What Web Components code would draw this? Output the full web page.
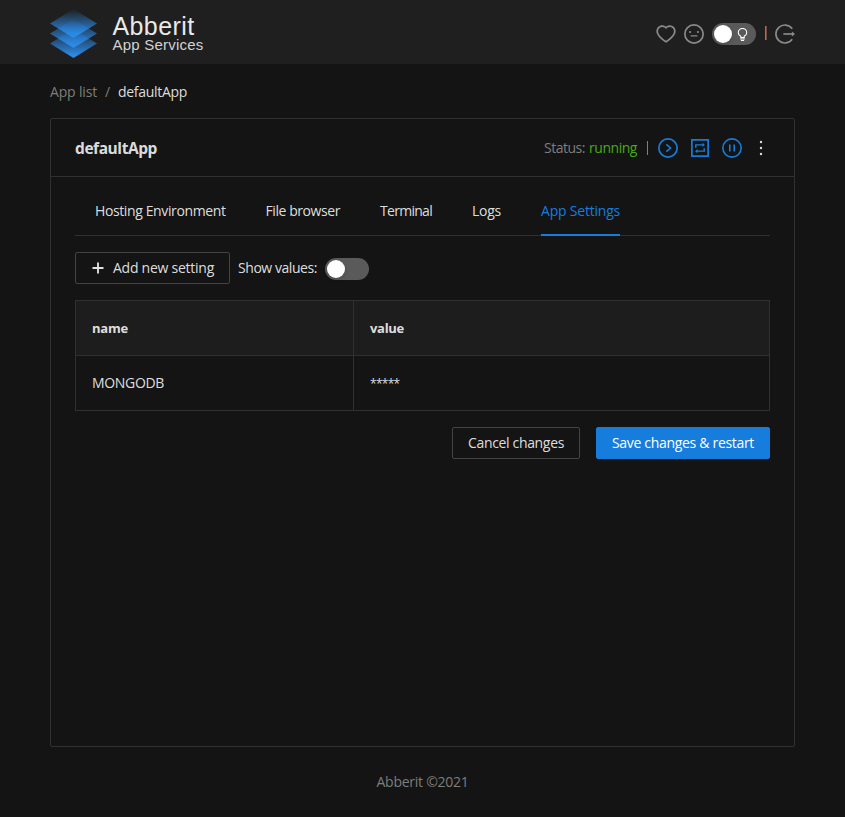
<!DOCTYPE html>
<html lang="en">
<head>
<meta charset="utf-8">
<title>Abberit App Services</title>
<style>
html,body{margin:0;background:#141414}
body{font:14px/22px "Open Sans","Noto Sans",sans-serif;color:rgba(255,255,255,.87);height:817px;overflow:hidden}
</style>
</head>
<body>
<app-page></app-page>
<script>
const define = (name, html, setup) => {
  const t = document.createElement('template');
  t.innerHTML = html;
  customElements.define(name, class extends HTMLElement {
    constructor() {
      super();
      this.attachShadow({ mode: 'open' }).append(t.content.cloneNode(true));
    }
    connectedCallback() { if (setup) setup(this, this.shadowRoot); }
  });
};

// A single-line label whose tracking is tuned so that it fills the width given in "w".
define('fit-text', `<style>:host{display:inline-block;white-space:nowrap;flex:none}span{display:inline-block;transform:translateY(var(--drop,0px))}</style><span><slot></slot></span>`, (el, root) => {
  const s = root.querySelector('span'), w = parseFloat(el.getAttribute('w'));
  s.style.letterSpacing = '0px';
  const n = el.textContent.length;
  s.style.letterSpacing = ((w - s.getBoundingClientRect().width) / n) + 'px';
  el.style.width = w + 'px';
});

const shapes = {
  heart: '<path fill="currentColor" d="M923 283.6a260.04 260.04 0 00-56.9-82.8 264.4 264.4 0 00-84-55.5A265.34 265.34 0 00679.7 125c-49.3 0-97.4 13.5-139.2 39-10 6.1-19.5 12.8-28.5 20.1-9-7.3-18.5-14-28.5-20.1-41.8-25.5-89.9-39-139.2-39-35.5 0-69.9 6.8-102.4 20.3-31.4 13-59.7 31.7-84 55.5a258.44 258.44 0 00-56.9 82.8c-13.9 32.3-21 66.6-21 101.9 0 33.3 6.8 68 20.3 103.3 11.3 29.5 27.5 60.1 48.2 91 32.8 48.9 77.9 99.9 133.9 151.6 92.8 85.7 184.7 144.9 188.6 147.3l23.7 15.2c10.5 6.7 24 6.7 34.5 0l23.7-15.2c3.9-2.5 95.7-61.6 188.6-147.3 56-51.7 101.1-102.7 133.9-151.6 20.7-30.9 37-61.5 48.2-91 13.5-35.3 20.3-70 20.3-103.3.1-35.3-7-69.6-20.9-101.9zM512 814.8S156 586.7 156 385.5C156 283.6 240.3 201 344.3 201c73.1 0 136.5 40.8 167.7 100.4C543.2 241.8 606.6 201 679.7 201c104 0 188.3 82.6 188.3 184.5 0 201.2-356 429.3-356 429.3z"/>',
  meh: '<circle cx="512" cy="512" r="410" fill="none" stroke="currentColor" stroke-width="76"/><circle cx="336" cy="421" r="48" fill="currentColor"/><circle cx="688" cy="421" r="48" fill="currentColor"/><rect x="360" y="565" width="304" height="60" rx="8" fill="currentColor"/>',
  bulb: '<g fill="none" stroke="currentColor" stroke-width="76"><path d="M394 730V635C300 580 220 490 220 386a292 292 0 01584 0c0 104-80 194-174 249v95z"/></g><rect x="356" y="790" width="312" height="60" rx="8" fill="currentColor"/><rect x="400" y="886" width="224" height="70" rx="16" fill="currentColor"/>',
  logout: '<g fill="none" stroke="currentColor" stroke-width="76"><path d="M836 275A404 404 0 10836 749"/><path d="M440 512h440"/></g><path fill="currentColor" d="M820 396v232l144-116z"/>',
  play: '<g fill="none" stroke="currentColor"><circle cx="512" cy="512" r="410" stroke-width="76"/><path stroke-width="72" d="M438 350l190 162-190 162"/></g>',
  sync: '<g fill="none" stroke="currentColor"><rect x="148" y="148" width="728" height="728" stroke-width="76"/><path stroke-width="64" d="M323 500V372H640M701 524V652H384"/></g><path fill="currentColor" d="M620 282l114 90-114 90zM404 562L290 652l114 90z"/>',
  pause: '<g fill="none" stroke="currentColor" stroke-width="72"><circle cx="512" cy="512" r="410"/><path d="M412 352v320M612 352v320"/></g>',
  plus: '<path fill="none" stroke="currentColor" stroke-width="120" d="M512 160v704M160 512h704"/>',
  more: '<g fill="currentColor"><circle cx="512" cy="212" r="60"/><circle cx="512" cy="512" r="60"/><circle cx="512" cy="812" r="60"/></g>'
};
define('ui-icon', `<style>:host{display:block;flex:none}svg{display:block}</style><div></div>`, (el, root) => {
  const s = el.getAttribute('size');
  root.querySelector('div').innerHTML = `<svg width="${s}" height="${s}" viewBox="64 64 896 896">${shapes[el.getAttribute('name')]}</svg>`;
});

define('ui-switch', `<style>
:host{display:flex;box-sizing:border-box;width:44px;height:22px;border-radius:11px;background:#5a5a5a;padding:2px;align-items:center;flex:none;color:#fff}
i{width:18px;height:18px;border-radius:9px;background:#fff;box-shadow:0 2px 4px rgba(0,35,11,.2);margin-right:4px}
</style><i></i><slot></slot>`);

define('app-logo', `<style>
:host{display:flex;gap:15.5px;font-family:"Liberation Sans",Arial,sans-serif;align-items:flex-start}
svg{display:block;margin-top:10px}
.t{display:flex;flex-direction:column;padding-top:14px}
.a{font-size:25px;line-height:24px;color:#e9e9e9}.b{font-size:15px;line-height:13px;color:#d2d2d2}
</style>
<svg width="47" height="49" viewBox="0 0 47 49">
<defs><linearGradient id="g" x1="0" y1="0" x2="0" y2="1"><stop offset="0" stop-color="#2b8ae6" stop-opacity="0"/><stop offset=".9" stop-color="#2b8ae6"/></linearGradient></defs>
<g fill="url(#g)"><path d="M0 33.5L23.500 19L47 33.500L23.500 48z"/><path d="M0 23.500L23.500 9L47 23.500L23.500 38z"/><path d="M0 13.500L23.500-1L47 13.500L23.500 28z"/></g></svg>
<div class="t"><fit-text class="a" w="82">Abberit</fit-text><fit-text class="b" w="91">App Services</fit-text></div>`);

define('app-header', `<style>
:host{display:flex;height:64px;background:#1f1f1f;padding:0 50px;justify-content:space-between}
.r{display:flex;align-items:center;padding-top:4px;gap:8px;color:#8a8a8a}
.bar{width:2px;height:14px;background:linear-gradient(90deg,#8070c8 50%,#7a4a38 50%);margin:-2px 0 0 1px}
</style><app-logo></app-logo>
<div class="r"><ui-icon name="heart" size="20"></ui-icon><ui-icon name="meh" size="20"></ui-icon><ui-switch><ui-icon name="bulb" size="13"></ui-icon></ui-switch><div class="bar"></div><ui-icon name="logout" size="20"></ui-icon></div>`);

define('app-breadcrumb', `<style>:host{display:flex;padding:16px 50px;gap:8px;color:#7d7d7d;--drop:.6px}.c{color:#dcdcdc}</style>
<fit-text w="47">App list</fit-text><fit-text w="5">/</fit-text><fit-text class="c" w="69">defaultApp</fit-text>`);

define('ui-card', `<style>
:host{display:flex;flex-direction:column;box-sizing:border-box;margin:0 50px;height:629px;border:1px solid #303030;border-radius:2px}
header{display:flex;justify-content:space-between;align-items:center;height:57px;border-bottom:1px solid #303030;padding:0 24px}
section{padding:0 24px}
</style><header><slot name="title"></slot><slot name="extra"></slot></header><section><slot></slot></section>`);

define('app-status', `<style>
:host{display:flex;align-items:center;color:#7d7d7d;height:22px}
.g{color:#49aa19;margin-left:4px}.bar{width:1px;height:14px;background:#7f7f7f;margin:1px 10px 0 10px}
.i{display:flex;gap:12px;color:#177ddc;align-items:center}.m{color:#dcdcdc;margin-left:10px}
</style><fit-text w="41">Status:</fit-text><fit-text class="g" w="48">running</fit-text><div class="bar"></div>
<div class="i"><ui-icon name="play" size="20"></ui-icon><ui-icon name="sync" size="20"></ui-icon><ui-icon name="pause" size="20"></ui-icon></div><ui-icon class="m" name="more" size="18"></ui-icon>`);

define('ui-tab', `<style>:host{display:block;box-sizing:border-box;height:59px;padding-top:23px}
:host([active]){color:#177ddc;border-bottom:2px solid #177ddc}</style><slot></slot>`);
define('ui-tabs', `<style>:host{display:flex;gap:40px;height:58px;padding:0 20px;border-bottom:1px solid #303030}</style><slot></slot>`);

define('ui-button', `<style>
:host{display:flex;box-sizing:border-box;height:32px;border:1px solid #434343;border-radius:2px;padding:0 15px;align-items:center;gap:8px}
:host([primary]){background:#177ddc;border-color:#177ddc;color:#fff}
</style><slot></slot>`);

define('settings-table', `<style>
:host{display:grid;grid-template-columns:278px 1fr;grid-template-rows:55px 55px;border:solid #303030;border-width:1px 0 0 1px;margin-top:16px}
div{display:flex;align-items:center;box-sizing:border-box;padding-left:16px;border:solid #303030;border-width:0 1px 1px 0}
.h{background:#1d1d1d;font-weight:700;font-size:13px}
.s{font-size:12px;--drop:1px}
</style><div class="h"><fit-text w="36">name</fit-text></div><div class="h"><fit-text w="34">value</fit-text></div>
<div><fit-text w="72">MONGODB</fit-text></div><div class="s"><fit-text w="29.500">*****</fit-text></div>`);

define('app-page', `<style>
:host{display:block}
.row{display:flex;align-items:center}.tools{gap:8px;margin-top:16px}.tools>ui-switch{margin-top:1px}.end{justify-content:flex-end;gap:16px;margin-top:16px}
.title{font-size:15.5px;font-weight:700}
footer{display:flex;justify-content:center;padding-top:24px;color:#7d7d7d}
</style>
<app-header></app-header><app-breadcrumb></app-breadcrumb>
<ui-card><fit-text slot="title" class="title" w="82">defaultApp</fit-text><app-status slot="extra"></app-status>
<ui-tabs><ui-tab><fit-text w="130.500">Hosting Environment</fit-text></ui-tab><ui-tab><fit-text w="74.500">File browser</fit-text></ui-tab><ui-tab><fit-text w="52">Terminal</fit-text></ui-tab><ui-tab><fit-text w="29">Logs</fit-text></ui-tab><ui-tab active><fit-text w="79">App Settings</fit-text></ui-tab></ui-tabs>
<div class="row tools"><ui-button><ui-icon name="plus" size="14"></ui-icon><fit-text w="101">Add new setting</fit-text></ui-button><fit-text w="79">Show values:</fit-text><ui-switch></ui-switch></div>
<settings-table></settings-table>
<div class="row end"><ui-button><fit-text w="96">Cancel changes</fit-text></ui-button><ui-button primary><fit-text w="142">Save changes &amp; restart</fit-text></ui-button></div>
</ui-card>
<footer><fit-text w="92">Abberit ©2021</fit-text></footer>`);
</script>
</body>
</html>
